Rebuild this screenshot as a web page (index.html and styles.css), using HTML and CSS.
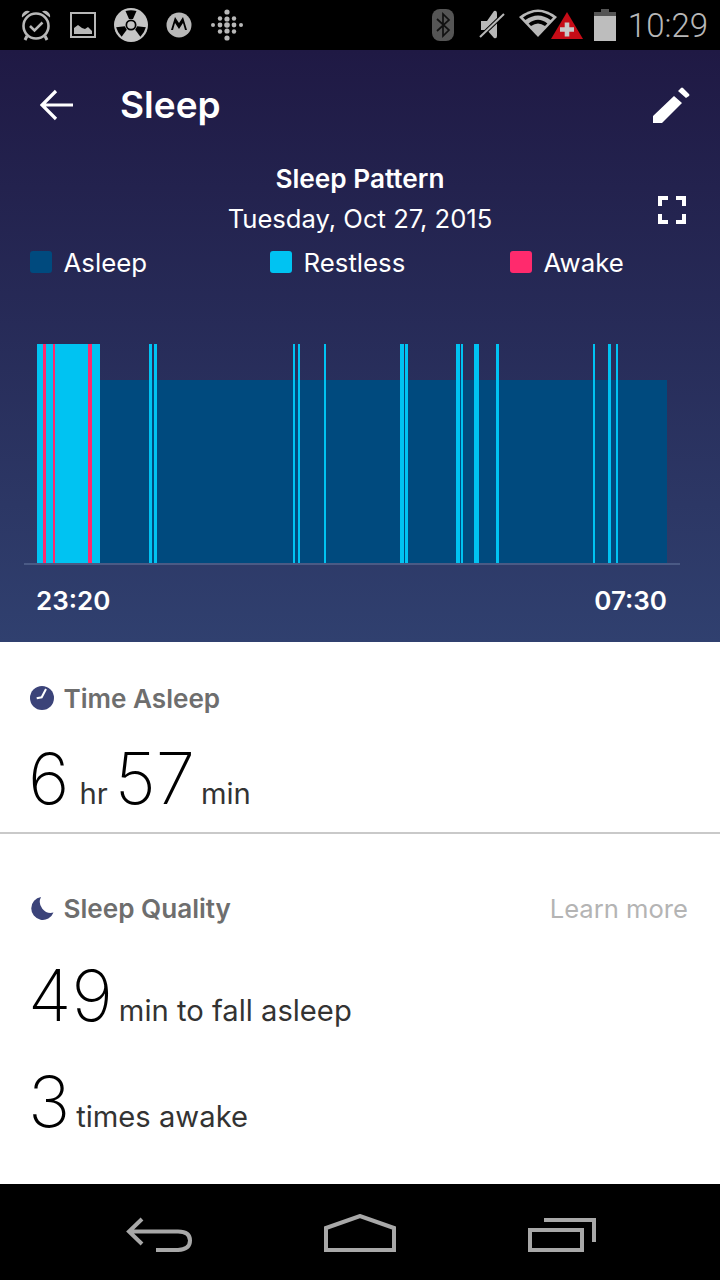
FILE: index.html
```html
<!DOCTYPE html>
<html lang="en">
<head>
<meta charset="utf-8">
<title>Sleep</title>
<link rel="stylesheet" href="styles.css">
</head>
<body>
<div class="screen">
  <div class="statusbar">
    <div class="status-left">
      <svg class="ic" width="32" height="34" viewBox="0 0 32 34"><circle cx="16" cy="18" r="12.5" fill="none" stroke="#b8b8b8" stroke-width="2.6"/><path d="M10 18l4.500 4.500 8-8" fill="none" stroke="#b8b8b8" stroke-width="2.500"/><path d="M2 9.500a5.500 5.500 0 0 1 8-6zM30 9.500a5.500 5.500 0 0 0-8-6z" fill="#b8b8b8"/><path d="M7 28l-2 4M25 28l2 4" stroke="#b8b8b8" stroke-width="3"/></svg>
      <svg class="ic" width="26" height="26" viewBox="0 0 26 26"><rect x="1" y="1" width="24" height="24" fill="none" stroke="#b8b8b8" stroke-width="2"/><path d="M4 22v-6l4-3 4 3 3 1 3-2 4 4v3z" fill="#b8b8b8"/></svg>
      <svg class="ic" width="34" height="34" viewBox="0 0 34 34"><circle cx="17" cy="17" r="17" fill="#c4c4c4"/><path d="M11.500 3L15 11h4l3.500-8Q17 1.500 11.500 3z" fill="#000"/><path d="M11.500 3L15 11h4l3.500-8Q17 1.500 11.500 3z" fill="#000" transform="rotate(120 17 17)"/><path d="M11.500 3L15 11h4l3.500-8Q17 1.500 11.500 3z" fill="#000" transform="rotate(240 17 17)"/><circle cx="17" cy="17" r="5.500" fill="#000"/><circle cx="17" cy="17" r="3.800" fill="#c4c4c4"/></svg>
      <svg class="ic" width="26" height="26" viewBox="0 0 26 26"><circle cx="13" cy="13" r="12.500" fill="#b8b8b8"/><path d="M5 18L9 5l4 6 4-6 4 13h-2L17 11l-4 6-4-6-2 7z" fill="#000"/></svg>
      <svg class="ic" width="34" height="32" viewBox="0 0 34 32"><g fill="#b8b8b8"><circle cx="17" cy="3" r="2.600"/><circle cx="17" cy="10" r="2.600"/><circle cx="17" cy="16" r="2.800"/><circle cx="17" cy="22" r="2.600"/><circle cx="17" cy="29" r="2.600"/><circle cx="10" cy="9.500" r="2.200"/><circle cx="10" cy="16" r="2.400"/><circle cx="10" cy="22.500" r="2.200"/><circle cx="24" cy="9.500" r="2.200"/><circle cx="24" cy="16" r="2.400"/><circle cx="24" cy="22.500" r="2.200"/><circle cx="3" cy="16" r="2"/><circle cx="31" cy="16" r="2"/></g></svg>
    </div>
    <div class="status-right">
      <svg class="bt" width="22" height="32" viewBox="0 0 22 32"><rect width="22" height="32" rx="8" fill="#555"/><path d="M5 10l12 11-6 6V5l6 6L5 22" fill="none" stroke="#111" stroke-width="1.700"/></svg>
      <svg class="mute" width="28" height="32" viewBox="0 0 28 32"><path d="M2 12h6L15 2q3-1 3 3v22q0 3-3 2L8 21H2z" fill="#b8b8b8"/><path d="M1 28L25 5" stroke="#000" stroke-width="4"/><path d="M1 28L25 5" stroke="#b8b8b8" stroke-width="2"/></svg>
      <svg class="wifi" width="38" height="30" viewBox="0 0 38 30"><path d="M19 29L0 9Q19-6 38 9z" fill="#b8b8b8"/><path d="M4 9.500Q19-1.500 34 9.500l-2.400 2.500Q19 3 6.400 12zM9.600 15.500Q19 8 28.400 15.500L26 18Q19 13 12 18z" fill="#000"/></svg>
      <svg class="warn" width="34" height="29" viewBox="0 0 34 29"><path d="M17 0L33 27H1z" fill="#c60c17"/><path d="M14.700 10.500h4.600v4.700H24v4.600h-4.700v4.700h-4.600v-4.700H10v-4.600h4.700z" fill="#c8c8c8"/></svg>
      <svg class="batt" width="22" height="32" viewBox="0 0 22 32"><path d="M7 0h8v3h7v4H0V3h7z" fill="#555"/><rect y="7" width="22" height="25" fill="#bdbdbd"/></svg>
      <span class="clock">10:29</span>
    </div>
  </div>

  <div class="hero">
    <div class="appbar">
      <div class="appbar-left">
        <svg width="34" height="32" viewBox="0 0 34 32"><path d="M33 16H3M16 2L2 16l14 14" fill="none" stroke="#fff" stroke-width="3.200"/></svg>
        <h1 class="title">Sleep</h1>
      </div>
      <svg class="pencil" width="38" height="38" viewBox="0 0 38 38"><path d="M0 30L21 10 29 17 9 37H0zM25 5L28 2Q29 1 30 2L36 8Q37 9 36 10L33 12z" fill="#fff"/></svg>
    </div>
    <div class="pattern">
      <div class="pattern-title">Sleep Pattern</div>
      <div class="pattern-date">Tuesday, Oct 27, 2015</div>
      <svg class="expand" width="28" height="28" viewBox="0 0 28 28"><path d="M2 10V2h8M18 2h8v8M26 18v8h-8M10 26H2v-8" fill="none" stroke="#fff" stroke-width="4"/></svg>
    </div>
    <div class="legend">
      <div class="legend-item"><span class="swatch swatch-asleep"></span>Asleep</div>
      <div class="legend-item"><span class="swatch swatch-restless"></span>Restless</div>
      <div class="legend-item"><span class="swatch swatch-awake"></span>Awake</div>
    </div>
    <svg class="chart" width="720" height="222" viewBox="0 344 720 222">
      <g class="bar-asleep"><rect x="100" y="380" width="567" height="184"/></g>
      <g class="bar-restless">
        <rect x="37" y="344" width="63" height="220"/>
        <rect x="149" y="344" width="3" height="220"/>
        <rect x="154" y="344" width="3" height="220"/>
        <rect x="293" y="344" width="2" height="220"/>
        <rect x="298" y="344" width="2" height="220"/>
        <rect x="324" y="344" width="2" height="220"/>
        <rect x="400" y="344" width="4" height="220"/>
        <rect x="405" y="344" width="3" height="220"/>
        <rect x="456" y="344" width="4" height="220"/>
        <rect x="461" y="344" width="2" height="220"/>
        <rect x="474" y="344" width="5" height="220"/>
        <rect x="496" y="344" width="3" height="220"/>
        <rect x="593" y="344" width="2" height="220"/>
        <rect x="608" y="344" width="3" height="220"/>
        <rect x="616" y="344" width="2" height="220"/>
      </g>
      <g class="bar-awake">
        <rect x="43" y="344" width="3" height="220"/>
        <rect x="53" y="344" width="2" height="220"/>
        <rect x="88" y="344" width="4" height="220"/>
      </g>
      <rect class="axis" x="24" y="563" width="656" height="2"/>
    </svg>
    <div class="times"><span>23:20</span><span>07:30</span></div>
  </div>

  <div class="content">
    <section class="asleep-section">
      <div class="section-head">
        <div class="section-title">
          <svg width="24" height="24" viewBox="0 0 24 24"><circle cx="12" cy="12" r="12" fill="#3b4379"/><path d="M16 3L11.700 11.300 6.700 12.300" stroke="#fff" stroke-width="2" fill="none"/></svg>
          <span>Time Asleep</span>
        </div>
      </div>
      <div class="metric metric-time"><span class="big">6</span><span class="unit unit-hr">hr</span><span class="big">57</span><span class="unit">min</span></div>
    </section>
    <section class="quality-section">
      <div class="section-head">
        <div class="section-title">
          <svg width="24" height="24" viewBox="0 -1 24 24"><path d="M11 0A11.500 11.500 0 1 0 23.500 15.500 11 11 0 0 1 11 0z" fill="#3b4379"/></svg>
          <span>Sleep Quality</span>
        </div>
        <span class="learn">Learn more</span>
      </div>
      <div class="metric metric-fall"><span class="big">49</span><span class="unit">min to fall asleep</span></div>
      <div class="metric metric-awake"><span class="big">3</span><span class="unit">times awake</span></div>
    </section>
  </div>

  <div class="navbar">
    <svg class="nav-back" width="68" height="36" viewBox="0 0 68 36"><path d="M16 2L3 14.500 16 27M3 14.500H52Q64 14.500 64 23.500T52 33H30" fill="none" stroke="#a8a8a8" stroke-width="4"/></svg>
    <svg class="nav-home" width="72" height="38" viewBox="0 0 72 38"><path d="M2 36V14L36 2 70 14V36z" fill="none" stroke="#a8a8a8" stroke-width="4"/></svg>
    <svg class="nav-recents" width="68" height="36" viewBox="0 0 68 36"><path d="M16 3H66V25" fill="none" stroke="#a8a8a8" stroke-width="4"/><rect x="2" y="13" width="52" height="20" fill="none" stroke="#a8a8a8" stroke-width="4"/></svg>
  </div>
</div>
</body>
</html>
```

FILE: styles.css
```css
* { box-sizing: border-box; }
html, body { margin: 0; padding: 0; }
body { background: #fff; font-family: "Inter", "Lato", sans-serif; }
.screen { width: 720px; height: 1280px; display: flex; flex-direction: column; overflow: hidden; }

.statusbar { height: 50px; background: #000; display: flex; justify-content: space-between; align-items: center; padding: 0 12px 0 20px; flex: none; }
.status-left { display: flex; align-items: center; gap: 18px; }
.status-left .ic { display: block; }
.status-right { display: flex; align-items: center; }
.status-right svg { display: block; }
.mute { margin-left: 25px; }
.wifi { margin-left: 12px; margin-top: -4px; }
.warn { margin-left: -7px; margin-top: 2px; }
.batt { margin-left: 10px; }
.clock { font-family: "Roboto", sans-serif; font-weight: 300; font-size: 33px; color: #b8b8b8; margin-left: 12px; }

.hero { height: 592px; flex: none; background: linear-gradient(180deg, #1f1944 0%, #30406f 100%); color: #fff; display: flex; flex-direction: column; }
.appbar { height: 110px; flex: none; display: flex; justify-content: space-between; align-items: center; padding: 0 29px 0 40px; }
.appbar-left { display: flex; align-items: center; gap: 46px; }
.title { margin: -2px 0 0; font-size: 37px; font-weight: 600; line-height: 1; }
.pattern { position: relative; text-align: center; height: 84px; flex: none; }
.pattern-title { font-size: 26.2px; font-weight: 600; line-height: 38px; }
.pattern-date { font-size: 25.6px; line-height: 42px; }
.expand { position: absolute; left: 658px; top: 36px; }
.legend { display: grid; grid-template-columns: 240px 240px 1fr; padding-left: 30px; flex: none; height: 38px; align-items: center; margin-top: -1px; }
.legend-item { display: flex; align-items: center; gap: 11.5px; font-size: 25.8px; }
.swatch { width: 22px; height: 22px; border-radius: 3px; flex: none; }
.swatch-asleep { background: #004a7e; }
.swatch-restless { background: #00c3f2; }
.swatch-awake { background: #ff2a6d; }
.chart { display: block; flex: none; margin-top: 63px; }
.bar-asleep { fill: #004a7e; }
.bar-restless { fill: #00c3f2; }
.bar-awake { fill: #ff2a6d; }
.axis { fill: #4a5a85; }
.times { display: flex; justify-content: space-between; padding: 0 53px 0 36px; font-size: 26px; font-weight: 600; line-height: 34px; margin-top: 18px; }

.content { flex: 1; color: #000; display: flex; flex-direction: column; }
.asleep-section { height: 192px; border-bottom: 2px solid #c9c9c9; padding: 39px 32px 0 30px; flex: none; }
.quality-section { padding: 57px 32px 0 30px; }
.section-head { display: flex; justify-content: space-between; align-items: center; height: 34px; }
.section-title { display: flex; align-items: center; gap: 9.5px; font-size: 26.1px; font-weight: 600; color: #6e6e6e; }
.section-title svg { display: block; }
.learn { font-size: 25.6px; color: #b4b4b4; }
.metric { display: flex; align-items: baseline; }
.big { font-size: 71px; font-weight: 200; line-height: 72px; color: #000; margin-left: -2px; }
.unit { font-size: 29.2px; margin: 0 9px 0 6px; color: #333; }
.unit-hr { margin-left: 10px; }
.metric-time { margin-top: 27px; }
.metric-fall { margin-top: 34px; }
.metric-awake { margin-top: 34px; }

.navbar { height: 96px; background: #000; flex: none; display: flex; align-items: center; justify-content: space-between; padding: 0 124px 0 126px; }
.navbar svg { display: block; }
.nav-back, .nav-recents { margin-top: 6px; }
.nav-home { margin-top: 2px; margin-right: 2px; }
```
